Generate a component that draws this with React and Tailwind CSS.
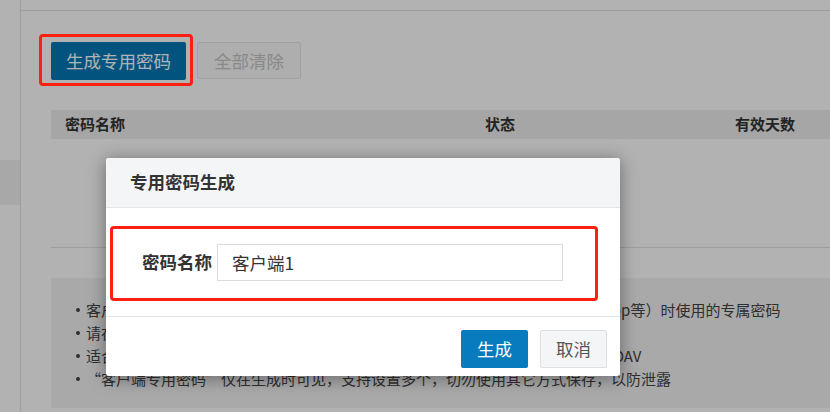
import React, { useState } from 'react';

const font = "font-['Microsoft_YaHei','Noto_Sans_CJK_SC','Noto_Sans',sans-serif]";

const tips = [
  '客户端专用密码是您登录第三方邮件客户端（如Foxmail、Outlook、手机邮件App等）时使用的专属密码',
  '请在客户端中使用该密码替代邮箱登录密码',
  '适合 通过第三方客户端使用 IMAP、POP3、SMTP、Exchange、CalDAV 、CardDAV',
];

const App = () => {
  const [name, setName] = useState('客户端1');

  return (
    <div className={`relative h-[412px] w-[830px] overflow-hidden bg-white text-[#333] ${font}`}>
      <div className="flex h-full">
        {/* SIDEBAR */}
        <aside className="w-[21px] shrink-0 border-r border-[#e2e2e2] pt-[160px]">
          <div className="h-[45px] bg-[#f1f1f1]" />
        </aside>

        {/* MAIN */}
        <main className="min-w-0 flex-1">
          <div className="h-[11px] border-b border-[#e2e2e2]" />
          <div className="pl-[30px]">
            <div className="mt-[31px] flex gap-[11px]">
              <button className="h-[38px] rounded-[2px] bg-[#0479b7] px-[15px] text-[17.5px] leading-none text-white">
                生成专用密码
              </button>
              <button className="h-[37px] rounded-[2px] border border-[#e6e6e6] bg-[#fafafa] px-[16px] text-[17.5px] leading-none text-[#c4c4c4]">
                全部清除
              </button>
            </div>

            {/* TABLE */}
            <div className="mt-[30px] border-b border-[#e2e2e2]">
              <div className="grid h-[29px] grid-cols-[420px_250px_1fr] items-center bg-[#edeeed] pl-[14px] text-[15px] font-bold text-[#333]">
                <span>密码名称</span>
                <span>状态</span>
                <span>有效天数</span>
              </div>
              <div className="h-[108px]" />
            </div>

            {/* TIPS */}
            <ul className="mt-[30px] h-[130px] bg-[#f2f2f2] pl-[25px] pt-[20px] text-[15px] leading-[23px] text-[#444]">
              {tips.map((t) => (
                <li key={t} className="flex items-center whitespace-nowrap">
                  <span className="mr-[6px] h-[4px] w-[4px] shrink-0 rounded-full bg-[#444]" />
                  <span>{t}</span>
                </li>
              ))}
              <li className="flex items-center whitespace-nowrap">
                <span className="mr-[6px] h-[4px] w-[4px] shrink-0 rounded-full bg-[#444]" />
                <span>
                  <span className="inline-block w-[15px] text-right">“</span>客户端专用密码
                  <span className="inline-block w-[15px]">”</span>仅在生成时可见，支持设置多个，切勿使用其它方式保存，以防泄露
                </span>
              </li>
            </ul>
          </div>
        </main>
      </div>

      {/* OVERLAY */}
      <div className="absolute inset-0 bg-black/30" />

      {/* DIALOG */}
      <div className="absolute left-[106px] top-[158px] w-[514px] overflow-hidden rounded-[3px] bg-white shadow-[0_2px_18px_rgba(0,0,0,0.4)]">
        <div className="flex h-[50px] items-center border-b border-[#e3e5e8] bg-[#f4f5f7] pl-[24px] text-[17.5px] font-bold text-[#333]">
          专用密码生成
        </div>
        <div className="flex h-[108px] items-center pl-[36px]">
          <label className="w-[75px] shrink-0 text-[17.5px] font-bold text-[#333]">密码名称</label>
          <input
            value={name}
            onChange={(e) => setName(e.target.value)}
            className="h-[37px] w-[346px] border border-[#dcdcdc] px-[14px] text-[17.5px] text-[#333] outline-none"
          />
        </div>
        <div className="flex h-[60px] justify-end gap-[12px] border-t border-[#e3e5e8] pr-[13px] pt-[13px]">
          <button className="h-[38px] w-[67px] rounded-[2px] bg-[#077bbe] text-[17.5px] leading-none text-white">生成</button>
          <button className="h-[38px] w-[67px] rounded-[2px] border border-[#dcdfe3] bg-[#f4f5f7] text-[17.5px] leading-none text-[#555]">
            取消
          </button>
        </div>
      </div>

      {/* ANNOTATIONS */}
      <div className="pointer-events-none absolute left-[39px] top-[34px] h-[52px] w-[154px] rounded-[4px] border-[3px] border-[#ff1f12]" />
      <div className="pointer-events-none absolute left-[110px] top-[226px] h-[75px] w-[488px] rounded-[4px] border-[3px] border-[#ff1f12]" />
    </div>
  );
};

export default App;
